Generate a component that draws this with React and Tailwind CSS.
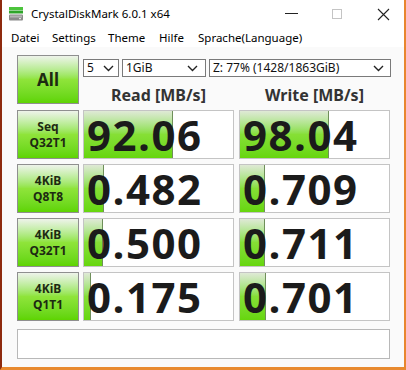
import React from "react";

const Chevron = () => (
  <svg width="11" height="7" viewBox="0 0 11 7" className="shrink-0">
    <path d="M1 1 L5.5 5.5 L10 1" fill="none" stroke="#222" strokeWidth="1.4" />
  </svg>
);

const Select = ({ w, text, pad }) => (
  <div
    className={`flex items-center justify-between h-[18px] border border-[#7a7a7a] bg-white pl-[3px] ${pad} text-[12px] leading-none text-[#111]`}
    style={{ width: w }}
  >
    <span>{text}</span>
    <Chevron />
  </div>
);

const GreenButton = ({ children, big }) => (
  <div
    className={`w-[62px] h-[49px] shrink-0 border border-[#8f8f8f] bg-gradient-to-b from-[#eef3ea] via-[#8fe43a] to-[#5ed400] flex flex-col items-center justify-center text-[#1d2a12] font-bold ${
      big ? "text-[17px]" : "text-[12px] leading-[16px]"
    }`}
  >
    {children}
  </div>
);

const Result = ({ value, bar }) => (
  <div className="relative w-[151px] h-[49px] border border-[#c4c4c4] bg-white">
    <div
      className="absolute left-0 top-0 bottom-0 bg-gradient-to-b from-[#dfe9d6] via-[#86df35] to-[#66d60c] border-r border-[#6f8f5a]"
      style={{ width: bar }}
    />
    <div
      className="relative h-full flex items-center pl-[3px] text-[42px] leading-[47px] font-bold tracking-[1.5px] text-[#1b1b1b]"
      style={{ fontFamily: '"Open Sans", "Noto Sans", sans-serif' }}
    >
      {value}
    </div>
  </div>
);

const rows = [
  { l1: "Seq", l2: "Q32T1", r: "92.06", rb: 89, w: "98.04", wb: 89 },
  { l1: "4KiB", l2: "Q8T8", r: "0.482", rb: 20, w: "0.709", wb: 25 },
  { l1: "4KiB", l2: "Q32T1", r: "0.500", rb: 19, w: "0.711", wb: 25 },
  { l1: "4KiB", l2: "Q1T1", r: "0.175", rb: 7, w: "0.701", wb: 26 },
];

export default function App() {
  return (
    <div
      className="w-[406px] h-[370px] flex flex-col bg-[#e47a2a] border-l-2 border-l-[#8e2a0e] border-r-2 border-r-[#e8862e] border-b-[3px] border-b-[#e88a30] overflow-hidden"
      style={{ fontFamily: '"Noto Sans", "Open Sans", sans-serif' }}
    >
      {/* Title bar */}
      <div className="h-[28px] bg-white flex items-center shrink-0 relative">
        <svg width="16" height="16" viewBox="0 0 16 16" className="ml-[6px]">
          <rect x="1" y="1" width="14" height="3" fill="#4cc43c" />
          <rect x="1" y="4.5" width="14" height="3" fill="#2fa52a" />
          <rect x="1" y="8.5" width="14" height="6" rx="1" fill="#8a8a8a" />
          <rect x="2" y="9.5" width="12" height="2" fill="#b5b5b5" />
          <rect x="11" y="12" width="2" height="1.2" fill="#e0e0e0" />
        </svg>
        <span className="ml-[7px] text-[11.5px] text-black">CrystalDiskMark 6.0.1 x64</span>
        <div className="absolute left-[283px] top-[13px] w-[13px] h-px bg-[#222]" />
        <div className="absolute left-[330px] top-[9px] w-[10px] h-[10px] border border-[#c4c4c4]" />
        <svg width="13" height="13" viewBox="0 0 13 13" className="absolute left-[375px] top-[8px]">
          <path d="M1 1 L12 12 M12 1 L1 12" stroke="#222" strokeWidth="1.1" />
        </svg>
      </div>

      {/* Menu bar */}
      <div className="h-[19px] bg-white flex items-center text-[11.5px] text-black shrink-0 pl-[9px]">
        <span className="w-[41px]">Datei</span>
        <span className="w-[56px]">Settings</span>
        <span className="w-[51px]">Theme</span>
        <span className="w-[39px]">Hilfe</span>
        <span>Sprache(Language)</span>
      </div>

      {/* Content */}
      <div className="flex-1 bg-[#fafafa] pl-[15px] pt-[8px] flex flex-col">
        <div className="flex">
          <GreenButton big>All</GreenButton>
          <div className="ml-[4px] flex flex-col">
            <div className="flex mt-[4px] gap-[3px]">
              <Select w={36} text="5" pad="pr-[4px]" />
              <Select w={84} text="1GiB" pad="pr-[7px]" />
              <Select w={182} text="Z: 77% (1428/1863GiB)" pad="pr-[6px]" />
            </div>
            <div className="flex mt-[8px] gap-[5px] text-[16px] font-bold text-[#333] leading-[20px]">
              <div className="w-[151px] text-center">Read [MB/s]</div>
              <div className="w-[151px] text-center">Write [MB/s]</div>
            </div>
          </div>
        </div>

        <div className="flex flex-col gap-[5px] mt-[5px]">
          {rows.map((r, i) => (
            <div key={i} className="flex">
              <GreenButton>
                <span>{r.l1}</span>
                <span>{r.l2}</span>
              </GreenButton>
              <div className="ml-[4px] flex gap-[5px]">
                <Result value={r.r} bar={r.rb} />
                <Result value={r.w} bar={r.wb} />
              </div>
            </div>
          ))}
        </div>

        <div className="mt-[8px] w-[373px] h-[30px] border border-[#b8b8b8] bg-white" />
      </div>
    </div>
  );
}
